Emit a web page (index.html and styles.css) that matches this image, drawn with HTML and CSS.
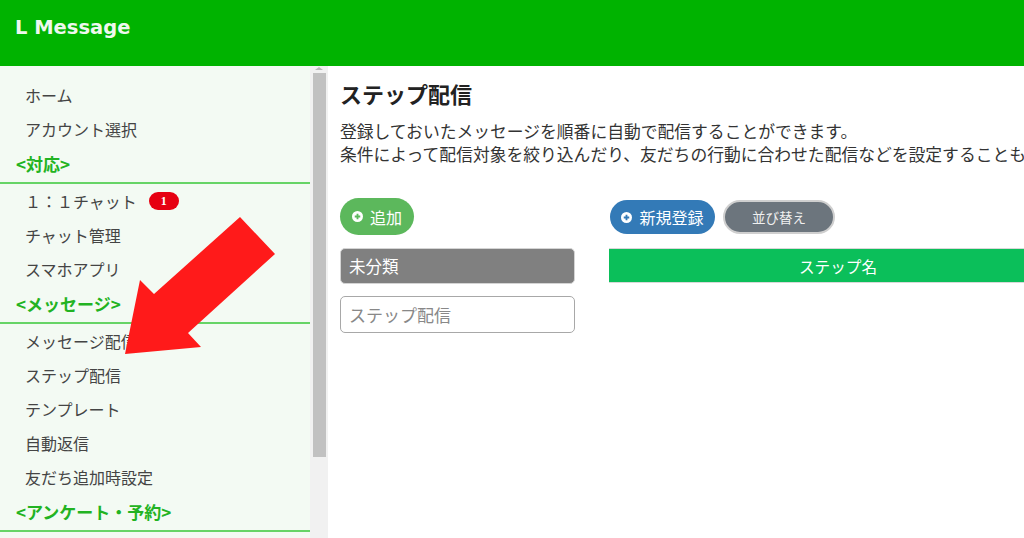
FILE: index.html
```html
<!DOCTYPE html>
<html lang="ja">
<head>
    <meta charset="UTF-8">
    <meta name="viewport" content="width=device-width, initial-scale=1.0">
    <title>ステップ配信 | L Message</title>
    <link rel="stylesheet" href="styles.css">
</head>
<body>
    <header class="topbar">
        <div class="brand">L Message</div>
    </header>

    <div class="layout">
        <!-- Side menu -->
        <aside class="sidebar">
            <ul class="menu">
                <li class="menu-item">ホーム</li>
                <li class="menu-item">アカウント選択</li>
                <li class="menu-head">&lt;対応&gt;</li>
                <li class="menu-item">１：１チャット<span class="badge">1</span></li>
                <li class="menu-item">チャット管理</li>
                <li class="menu-item">スマホアプリ</li>
                <li class="menu-head">&lt;メッセージ&gt;</li>
                <li class="menu-item">メッセージ配信</li>
                <li class="menu-item">ステップ配信</li>
                <li class="menu-item">テンプレート</li>
                <li class="menu-item">自動返信</li>
                <li class="menu-item">友だち追加時設定</li>
                <li class="menu-head">&lt;アンケート・予約&gt;</li>
            </ul>
        </aside>
        <div class="scrollbar">
            <div class="scroll-up"></div>
            <div class="scroll-thumb"></div>
        </div>

        <!-- Main -->
        <main class="content">
            <h1>ステップ配信</h1>
            <p class="lead">
                登録しておいたメッセージを順番に自動で配信することができます。<br>
                条件によって配信対象を絞り込んだり、友だちの行動に合わせた配信などを設定することもできます。
            </p>

            <div class="columns">
                <div class="col-left">
                    <button class="btn btn-green">
                        <svg class="plus" viewBox="0 0 12 12"><circle cx="6" cy="6" r="6" fill="#fff"/><path d="M6 3v6M3 6h6" stroke="#5cb85c" stroke-width="2"/></svg>追加
                    </button>
                    <div class="category">未分類</div>
                    <input class="category-input" type="text" placeholder="ステップ配信">
                </div>
                <div class="col-right">
                    <div class="toolbar">
                        <button class="btn btn-blue">
                            <svg class="plus" viewBox="0 0 12 12"><circle cx="6" cy="6" r="6" fill="#fff"/><path d="M6 3v6M3 6h6" stroke="#337ab7" stroke-width="2"/></svg>新規登録
                        </button>
                        <button class="btn btn-gray">並び替え</button>
                    </div>
                    <div class="table-head">ステップ名</div>
                </div>
            </div>
        </main>
    </div>

    <!-- pointer annotation -->
    <svg class="arrow" viewBox="0 0 1024 538">
        <polygon points="125,354 140,280 154,294 240,217 275,254 188,333 201,347" fill="#ff1a1a"/>
    </svg>
</body>
</html>
```

FILE: styles.css
```css
body {
    margin: 0;
    font-family: "Noto Sans CJK JP", "Noto Sans", sans-serif;
    color: #333;
    overflow: hidden;
    height: 538px;
}
.topbar {
    height: 66px;
    background-color: #00b300;
    display: flex;
    align-items: center;
    padding-left: 15px;
}
.brand {
    font-family: "DejaVu Sans", sans-serif;
    font-weight: bold;
    font-size: 19.5px;
    color: #eef8ee;
    margin-top: -12px;
}
.layout {
    display: flex;
    height: 472px;
}
.sidebar {
    width: 310px;
    background-color: #f3faf3;
    overflow: hidden;
}
.menu {
    list-style: none;
    margin: 0;
    padding: 12px 0 0;
}
.menu-item {
    font-size: 16px;
    line-height: 34px;
    padding-left: 25px;
    color: #444;
    display: flex;
    align-items: center;
}
.menu-head {
    font-size: 17px;
    font-weight: bold;
    color: #22b322;
    line-height: 24px;
    padding: 6px 0 6px 16px;
    border-bottom: 2px solid #66d466;
}
.badge {
    display: inline-block;
    width: 30px;
    height: 18px;
    line-height: 18px;
    margin-left: 12px;
    border-radius: 9px;
    background-color: #e60012;
    color: #fff;
    font-family: "Liberation Serif", serif;
    font-weight: bold;
    font-size: 12px;
    text-align: center;
}
.scrollbar {
    width: 18px;
    background-color: #f1f1f1;
    display: flex;
    flex-direction: column;
    align-items: center;
}
.scroll-up {
    width: 0;
    height: 0;
    margin-top: 1px;
    border-left: 4px solid transparent;
    border-right: 4px solid transparent;
    border-bottom: 3px solid #b8b8b8;
}
.scroll-thumb {
    width: 13px;
    height: 384px;
    margin-top: 3px;
    background-color: #c1c1c1;
}
.content {
    flex: 1;
    min-width: 0;
    padding-left: 12px;
    overflow: hidden;
}
h1 {
    font-size: 22px;
    line-height: 30px;
    margin: 12px 0 0;
    color: #222;
}
.lead {
    font-size: 16.8px;
    line-height: 23px;
    margin: 12px 0 0;
    white-space: nowrap;
    color: #333;
}
.columns {
    display: flex;
    gap: 34px;
    margin-top: 32px;
}
.col-left {
    width: 235px;
    flex-shrink: 0;
    display: flex;
    flex-direction: column;
    align-items: flex-start;
}
.col-right {
    width: 458px;
    flex-shrink: 0;
}
.btn {
    font-family: "Noto Sans CJK JP", sans-serif;
    border: none;
    color: #fff;
    display: inline-flex;
    align-items: center;
    justify-content: center;
    padding: 0;
    cursor: pointer;
}
.plus {
    width: 11px;
    height: 11px;
    margin-right: 7px;
}
.btn-green {
    width: 74px;
    height: 37px;
    border-radius: 19px;
    background-color: #5cb85c;
    font-size: 16px;
}
.category {
    width: 235px;
    height: 36px;
    box-sizing: border-box;
    margin-top: 13px;
    padding-left: 8px;
    line-height: 34px;
    background-color: #808080;
    border: 1px solid #d4d4d4;
    border-radius: 5px;
    color: #fff;
    font-size: 16.5px;
}
.category-input {
    width: 235px;
    height: 37px;
    box-sizing: border-box;
    margin-top: 12px;
    padding: 0 8px;
    border: 1px solid #a8a8a8;
    border-radius: 5px;
    font-family: "Noto Sans CJK JP", sans-serif;
    font-size: 17px;
}
.category-input::placeholder {
    color: #888;
}
.toolbar {
    display: flex;
    gap: 8px;
    margin-top: 2px;
    padding-left: 1px;
}
.btn-blue {
    width: 105px;
    height: 34px;
    border-radius: 17px;
    background-color: #337ab7;
    font-size: 16px;
}
.btn-gray {
    width: 112px;
    height: 34px;
    box-sizing: border-box;
    border-radius: 17px;
    border: 2px solid #cfcfcf;
    background-color: #6c757d;
    font-size: 13.5px;
    color: #f0f0f0;
}
.table-head {
    margin-top: 14px;
    height: 35px;
    line-height: 35px;
    background-color: #0bbf5a;
    border-top: 1px solid #d8d8d8;
    border-bottom: 1px solid #d8d8d8;
    box-sizing: border-box;
    text-align: center;
    color: #fff;
    font-size: 15.6px;
}
.arrow {
    position: absolute;
    left: 0;
    top: 0;
    width: 1024px;
    height: 538px;
    pointer-events: none;
}
```
